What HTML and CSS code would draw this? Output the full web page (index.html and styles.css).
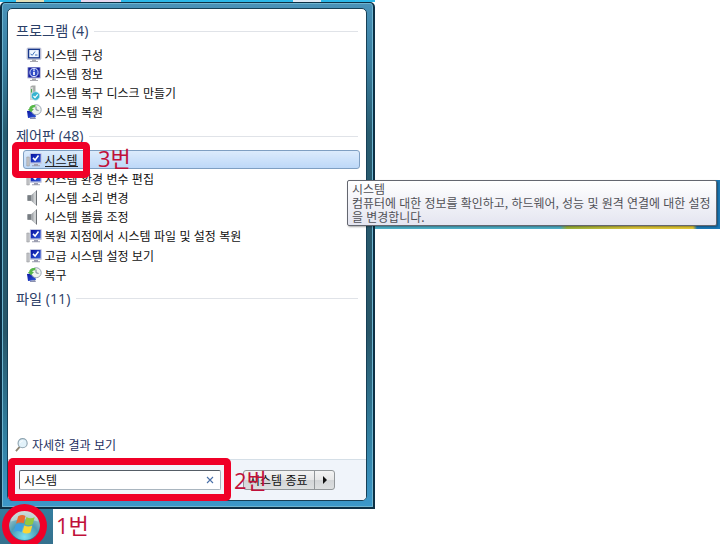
FILE: index.html
```html
<!DOCTYPE html>
<html lang="ko">
<head>
  <meta charset="UTF-8" />
  <title>시작 메뉴</title>
  <link rel="stylesheet" href="styles.css">
</head>
<body>

  <!-- Shared icons -->
  <svg class="sprite">
    <linearGradient id="screen" x1="0" y1="0" x2="1" y2="1"><stop offset="0" stop-color="#0712a0"/><stop offset="1" stop-color="#3159d8"/></linearGradient>
    <symbol id="config" viewBox="0 0 16 16">
      <rect x="1" y="1" width="14" height="11.5" rx="1" fill="#c9cde0" stroke="#a9acc6" stroke-width=".6"/>
      <rect x="2.6" y="2.4" width="10.8" height="8.4" fill="#f1f7ff" stroke="#18388c" stroke-width="1.3"/>
      <path d="M4.5 7l1.8 1.2L9 4.5M9 8h2.5" fill="none" stroke="#4777bd"/>
      <path d="M6 12.5h4V14h2v1H4v-1h2z" fill="#a9a9b0"/>
    </symbol>
    <symbol id="info" viewBox="0 0 16 16">
      <rect x="1" y="1" width="14" height="11.5" rx="1" fill="#c5c7e0"/>
      <rect x="2.2" y="1.5" width="11.6" height="10" fill="#1822a0"/>
      <circle cx="8" cy="6.5" r="4.1" fill="#304bc5" stroke="#dce5ff"/>
      <path d="M8 5.8V9M8 3.4v1.4" stroke="#fff" stroke-width="1.7"/>
      <path d="M6 12.5h4V14h2v1H4v-1h2z" fill="#a9a9b0"/>
    </symbol>
    <symbol id="disk" viewBox="0 0 16 16">
      <path d="M4 2L6 .5h3.5v11l-2 3H4z" fill="#a7aaa8"/>
      <path d="M4 2h3.2v12.5H4z" fill="#d2d5d2"/>
      <path d="M5.5 4v3.5" stroke="#4bad4f"/>
      <circle cx="9.5" cy="11" r="4.2" fill="#36b3d0" stroke="#c0e5ed" stroke-width=".7"/>
      <path d="M7.5 11L9 12.6l2.8-3.3" fill="none" stroke="#fff" stroke-width="1.2"/>
    </symbol>
    <symbol id="restore" viewBox="0 0 16 16">
      <path d="M1 7l7-1 2 7-8 1z" fill="url(#screen)"/>
      <path d="M4 14l5-1 1 2H4z" fill="#8b91b0"/>
      <circle cx="10.2" cy="5.7" r="5" fill="#eff4ee" stroke="#9da8b8"/>
      <path d="M10 2.5v3.3l2.6.6" fill="none" stroke="#758394"/>
      <path d="M9.5 1.2C5.5.5 3 3 3.2 5H1.8L5 8.200 8 5H6.2c.1-1 1.2-2 3-1.8z" fill="#58b84a"/>
    </symbol>
    <symbol id="system" viewBox="0 0 16 16">
      <path d="M.8 5h2.5v9H.8z" fill="#c4c5c7" stroke="#8d9094" stroke-width=".5"/>
      <rect x="3.8" y="1" width="12" height="11" rx="1" fill="#c6cae2"/>
      <rect x="4.8" y="2" width="9.8" height="8.4" fill="url(#screen)"/>
      <path d="M7 5.9L9.100 8l3.4-4.5" fill="none" stroke="#fff" stroke-width="1.5"/>
      <path d="M8 12h4v1.3h2v1H6v-1h2z" fill="#9c9eb0"/>
    </symbol>
    <symbol id="speaker" viewBox="0 0 16 16">
      <path d="M1.5 5.2H5L10.5.5v15L5 10.8H1.5z" fill="#a5a9ad"/>
      <path d="M1.5 5.2H5v5.6H1.5z" fill="#777d82"/>
      <path d="M7.5 3.3l3-2.8v15l-3-2.8z" fill="#cdd0d2"/>
      <path d="M10.5.5v15" stroke="#6c7075"/>
    </symbol>
  </svg>

  <div class="wallpaper-top"><i></i><i></i><i></i></div>

  <div class="start-menu">
    <div class="panel">
      <div class="results">
        <h2>프로그램 (4)</h2>
        <ul>
          <li><svg><use href="#config"/></svg><span>시스템 구성</span></li>
          <li><svg><use href="#info"/></svg><span>시스템 정보</span></li>
          <li><svg><use href="#disk"/></svg><span>시스템 복구 디스크 만들기</span></li>
          <li><svg><use href="#restore"/></svg><span>시스템 복원</span></li>
        </ul>
        <h2>제어판 (48)</h2>
        <ul>
          <li class="selected"><svg><use href="#system"/></svg><span>시스템</span></li>
          <li><svg><use href="#system"/></svg><span>시스템 환경 변수 편집</span></li>
          <li><svg><use href="#speaker"/></svg><span>시스템 소리 변경</span></li>
          <li><svg><use href="#speaker"/></svg><span>시스템 볼륨 조정</span></li>
          <li><svg><use href="#system"/></svg><span>복원 지점에서 시스템 파일 및 설정 복원</span></li>
          <li><svg><use href="#system"/></svg><span>고급 시스템 설정 보기</span></li>
          <li><svg><use href="#restore"/></svg><span>복구</span></li>
        </ul>
        <h2>파일 (11)</h2>
      </div>
      <div class="more">
        <svg viewBox="0 0 14 16"><path d="M5 10l-4 4.5" stroke="#8c8371" stroke-width="2"/><circle cx="8.2" cy="6" r="4.9" fill="#e2f2fa" stroke="#8da3b0" stroke-width="1.2"/><path d="M5.8 5.5q.6-2 2.6-2" fill="none" stroke="#fff"/></svg>
        <span>자세한 결과 보기</span>
      </div>
      <div class="footer">
        <div class="search"><span>시스템</span><svg viewBox="0 0 8 8"><path d="M1 1l6 6M7 1L1 7" stroke="#4a70a8" stroke-width="1.1"/></svg></div>
        <div class="shutdown"><span>시스템 종료</span><b></b></div>
      </div>
    </div>
  </div>

  <div class="taskbar">
    <svg viewBox="0 0 32 32">
      <defs><radialGradient id="orb" cx=".5" cy=".9" r=".9"><stop offset="0" stop-color="#7ce0f0"/><stop offset=".5" stop-color="#4b9db5"/><stop offset="1" stop-color="#c9d6d2"/></radialGradient></defs>
      <circle cx="16" cy="16" r="16" fill="url(#orb)"/>
      <path d="M2 13a14 12 0 0 1 28 0q-14-5-28 0z" fill="#e6e9e2" opacity=".55"/>
      <path d="M9.500 7.500q4-2.500 7.500-.3l-1.800 7.600q-4-2-8 .3z" fill="#ea6a30"/>
      <path d="M18 8.200q4 2.500 8.500.3l-2 7.200q-4.500 2.300-8.300-.2z" fill="#93c840"/>
      <path d="M6.800 16.300q4-2.300 8 0l-1.900 7.600q-4-2.200-8 0z" fill="#3f9fe2"/>
      <path d="M15.800 17q4 2.300 8.300 0l-2 7.300q-4.200 2.300-8.200-.2z" fill="#fcd534"/>
    </svg>
  </div>

  <!-- Tooltip over the desktop -->
  <div class="wallpaper-right"></div>
  <div class="tooltip">시스템<br>컴퓨터에 대한 정보를 확인하고, 하드웨어, 성능 및 원격 연결에 대한 설정<br>을 변경합니다.</div>

  <!-- Step marks -->
  <div class="mark mark-1"></div>
  <div class="mark mark-2"></div>
  <div class="mark mark-3"></div>
  <div class="step step-1">1번</div>
  <div class="step step-2">2번</div>
  <div class="step step-3">3번</div>

</body>
</html>
```

FILE: styles.css
```css
* {
  box-sizing: border-box;
}

body {
  margin: 0;
  height: 544px;
  overflow: hidden;
  position: relative;
  background: #fff;
  font: 12px/14px "Noto Sans CJK KR", sans-serif;
  color: #111;
}

.sprite {
  position: absolute;
  width: 0;
  height: 0;
}

.wallpaper-top {
  display: flex;
  width: 375px;
  height: 2px;
  padding-left: 16px;
  background: #2cb8e8;
}

.wallpaper-top i {
  width: 28px;
  background: #e4e0b8;
}

.wallpaper-top i:nth-child(2) {
  width: 40px;
  margin-left: 37px;
  background: #ead8ef;
}

.wallpaper-top i:nth-child(3) {
  margin-left: 172px;
  background: #e3eaf4;
}

.start-menu {
  width: 375px;
  height: 507px;
  padding: 5px 6px 7px 5px;
  border: 1px solid #0d3045;
  border-width: 1px 2px 2px;
  border-radius: 5px 5px 0 0;
  box-shadow: inset 0 0 0 1px #6fb5d0;
  background: linear-gradient(#4a93b9, #397e9f 60px, #285c70 130px, #285668 330px, #327f9f 430px, #3c98ca);
}

.panel {
  display: flex;
  flex-direction: column;
  height: 493px;
  border: 1px solid #174057;
  border-radius: 5px;
  background: #fff;
  overflow: hidden;
}

.results {
  flex: 1;
  padding: 8px 6px 0 8px;
}

h2 {
  display: flex;
  align-items: center;
  gap: 6px;
  height: 28.2px;
  margin: 0;
  font: 14.2px/20px "Open Sans", "Noto Sans CJK KR", sans-serif;
  color: #2c4068;
}

h2::after {
  content: "";
  flex: 1;
  height: 1px;
  background: #e0e3e8;
  margin-right: 2px;
}

ul {
  list-style: none;
  margin: 0;
  padding: 0 0 0 7px;
}

li {
  display: flex;
  align-items: center;
  gap: 2.5px;
  height: 19.2px;
  padding-left: 3px;
}

li svg {
  width: 16px;
  height: 16px;
}

li.selected {
  padding-left: 2px;
  border: 1px solid #7f9fc2;
  border-radius: 3px;
  background: linear-gradient(#dcebfc, #bdd8f8);
}

.selected span {
  border-bottom: 1px solid #222;
  line-height: 13px;
}

.more {
  display: flex;
  align-items: center;
  gap: 4px;
  height: 29px;
  padding-left: 7px;
  color: #1c2f60;
}

.more svg {
  width: 13px;
  height: 16px;
}

.footer {
  display: flex;
  gap: 22px;
  height: 41px;
  padding: 10px 0 0 11px;
  border-top: 1px solid #d5dfe7;
  background: #f0f4fa;
}

.search {
  display: flex;
  align-items: center;
  justify-content: space-between;
  width: 202px;
  height: 20px;
  padding: 0 6px 0 4px;
  border: 1px solid #a9b5bf;
  border-color: #555d66 #a9b5bf #a9b5bf #666;
  border-radius: 2px;
  background: #fff;
}

.search svg {
  width: 8px;
  height: 8px;
}

.shutdown {
  display: flex;
  width: 92px;
  height: 20px;
  border: 1px solid #929699;
  border-radius: 3px;
  background: linear-gradient(#f4f4f4, #e7e7e7 48%, #d3d5d7 52%, #dddfe0);
  line-height: 17px;
  white-space: nowrap;
}

.shutdown span {
  width: 71px;
  padding-left: 5px;
  border-right: 1px solid #929699;
}

.shutdown b {
  margin: 5px 0 0 8px;
  border: 4px solid transparent;
  border-left-color: #111;
  border-right: 0;
  height: 0;
}

.taskbar {
  width: 53px;
  height: 35px;
  padding-left: 9px;
  background: linear-gradient(#347e9f, #35718e);
}

.taskbar svg {
  width: 31px;
  height: 31px;
}

.wallpaper-right {
  position: absolute;
  left: 375px;
  top: 180px;
  width: 345px;
  height: 49px;
  background: linear-gradient(90deg, #4fb0c9 185px, #9cb43a 192px, #dcc63c 260px, #e4c934 318px, #1b79b8 322px);
}

.tooltip {
  position: absolute;
  left: 347px;
  top: 180px;
  width: 370px;
  height: 46px;
  padding: 1px 4px;
  border: 1px solid #646770;
  border-radius: 2px;
  box-shadow: 1px 1px 2px rgba(0, 0, 0, 0.35);
  background: linear-gradient(#fff, #e4e5f0);
  color: #505056;
  font-size: 11.95px;
  white-space: nowrap;
}

.mark {
  position: absolute;
  border: 7px solid #f00028;
  border-radius: 5px;
}

.mark-1 {
  left: 2px;
  top: 504px;
  width: 45px;
  height: 44px;
  border-radius: 50%;
}

.mark-2 {
  left: 8px;
  top: 458px;
  width: 223px;
  height: 43px;
}

.mark-3 {
  left: 12px;
  top: 142px;
  width: 78px;
  height: 36px;
}

.step {
  position: absolute;
  font: 22px/26px "Open Sans", "Noto Sans CJK KR", sans-serif;
  color: #c0103a;
}

.step-1 {
  left: 56px;
  top: 512px;
}

.step-2 {
  left: 234px;
  top: 467px;
}

.step-3 {
  left: 98px;
  top: 145px;
}
```
